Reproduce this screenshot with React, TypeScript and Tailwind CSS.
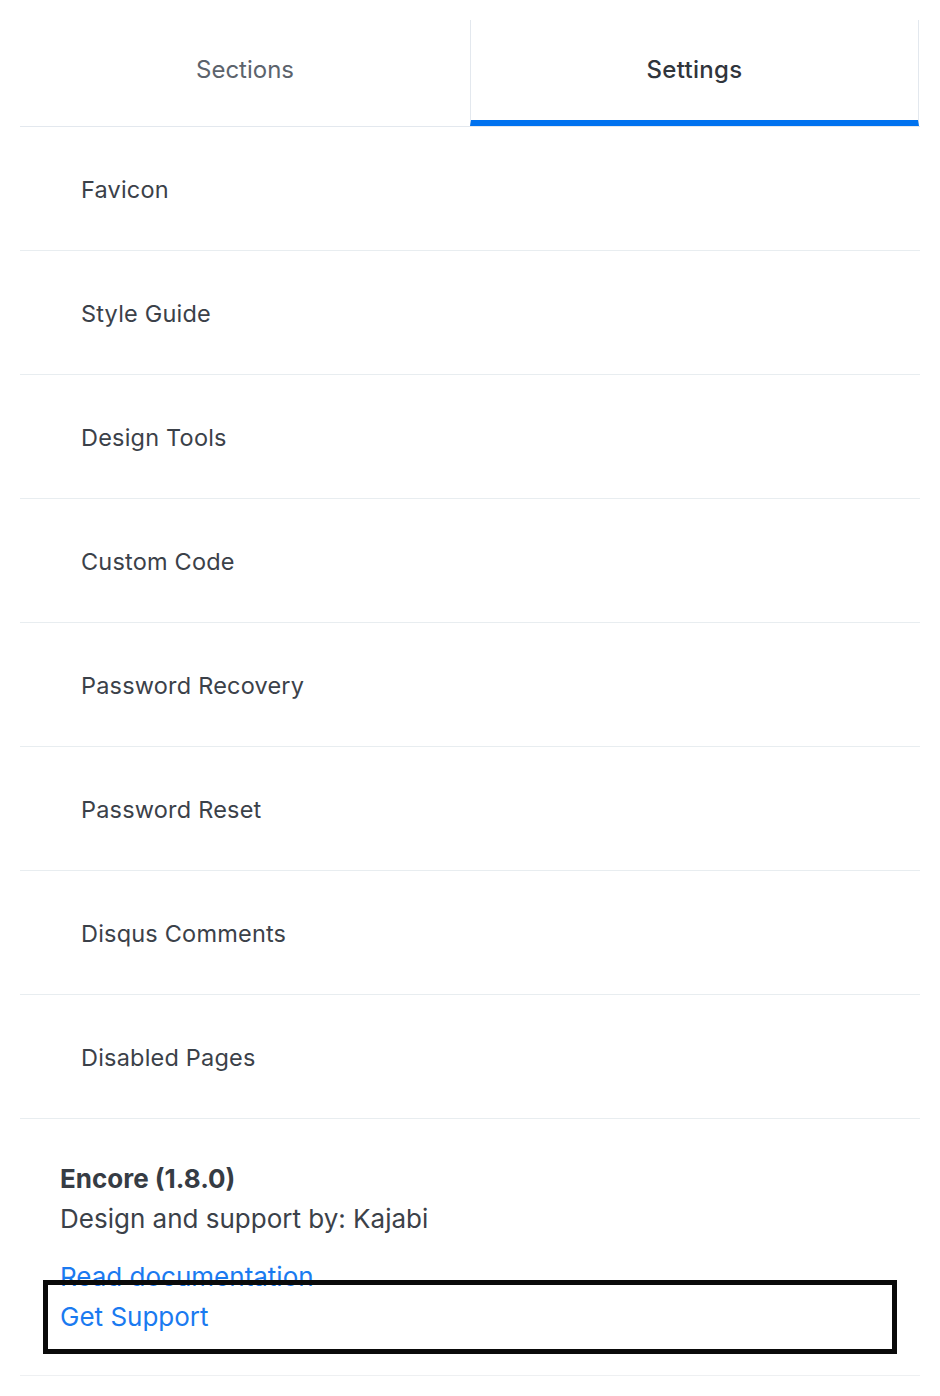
import React from "react";

const items = [
  "Favicon",
  "Style Guide",
  "Design Tools",
  "Custom Code",
  "Password Recovery",
  "Password Reset",
  "Disqus Comments",
  "Disabled Pages",
];

export default function App() {
  return (
    <div className="min-h-[1396px] bg-white px-[20px] pt-[20px] font-['Inter',sans-serif] text-[#3b4149]">
      <div className="grid grid-cols-2 border-b border-[#e3e8ee]">
        <button className="h-[106px] pb-[6px] text-[24px] text-[#5c636c]">Sections</button>
        <button className="mr-[1px] h-[106px] border-x border-b-[6px] border-x-[#e3e8ee] border-b-[#0072ef] text-[24px] font-medium tracking-[0.3px] text-[#30353c]">
          Settings
        </button>
      </div>

      {items.map((item) => (
        <div
          key={item}
          className="flex h-[124px] items-center border-b border-[#e8edf0] pl-[61px] pt-[2px] text-[23.5px] tracking-[0.2px]"
        >
          {item}
        </div>
      ))}

      <div className="border-b border-[#eef0f2] px-[40px] pt-[40px] pb-[38px] text-[26px] leading-[40px]">
        <p className="font-bold text-[#363c44]">Encore (1.8.0)</p>
        <p>Design and support by: Kajabi</p>
        <div className="mt-[18px] flex flex-col text-[#1a7af0]">
          <a href="#" className="block leading-[40px]">
            Read documentation
          </a>
          <a
            href="#"
            className="block leading-[40px] outline-[5px] outline-offset-[12px] outline-[#0a0a0a] outline-solid"
          >
            Get Support
          </a>
        </div>
      </div>
    </div>
  );
}
